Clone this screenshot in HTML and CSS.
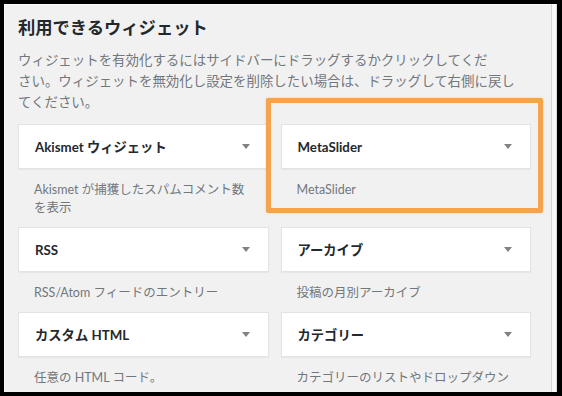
FILE: index.html
```html
<!doctype html>
<html lang="ja">
<head>
  <meta charset="utf-8" />
  <meta name="viewport" content="width=device-width,initial-scale=1" />
  <title>利用できるウィジェット</title>
  <link rel="stylesheet" href="styles.css">
</head>
<body>
  <div class="screen">
    <div class="panel">
      <h2>利用できるウィジェット</h2>
      <p class="intro">ウィジェットを有効化するにはサイドバーにドラッグするかクリックしてくだ<br>さい。ウィジェットを無効化し設定を削除したい場合は、ドラッグして右側に戻し<br>てください。</p>

      <div class="widgets">
        <div class="widget">
          <div class="widget-top"><span class="widget-title">Akismet ウィジェット</span><span class="arrow"></span></div>
          <p class="widget-desc">Akismet が捕獲したスパムコメント数を表示</p>
        </div>
        <div class="widget marked">
          <div class="widget-top"><span class="widget-title">MetaSlider</span><span class="arrow"></span></div>
          <p class="widget-desc">MetaSlider</p>
          <div class="mark"></div>
        </div>
        <div class="widget">
          <div class="widget-top"><span class="widget-title">RSS</span><span class="arrow"></span></div>
          <p class="widget-desc">RSS/Atom フィードのエントリー</p>
        </div>
        <div class="widget">
          <div class="widget-top"><span class="widget-title">アーカイブ</span><span class="arrow"></span></div>
          <p class="widget-desc">投稿の月別アーカイブ</p>
        </div>
        <div class="widget">
          <div class="widget-top"><span class="widget-title">カスタム HTML</span><span class="arrow"></span></div>
          <p class="widget-desc">任意の HTML コード。</p>
        </div>
        <div class="widget">
          <div class="widget-top"><span class="widget-title">カテゴリー</span><span class="arrow"></span></div>
          <p class="widget-desc">カテゴリーのリストやドロップダウン</p>
        </div>
      </div>
    </div>
    <div class="edge"></div>
  </div>
</body>
</html>
```

FILE: styles.css
```css
body { margin:0; background:#000; font-family: Lato, "Noto Sans CJK JP", sans-serif; color:#23282d; }
.screen { display:flex; height:388px; margin:4px 5px 4px 4px; background:#f1f1f1; overflow:hidden; }
.panel { flex:1; padding:11px 0 0 13px; border-top:1px solid #fafafa; border-left:1px solid #fafafa; }
.edge { width:4px; background:#f9f9f9; border-left:1px solid #d6d6d6; border-right:1px solid #dcdcdc; }

h2 { margin:0 0 10px; font-size:17.3px; line-height:24px; font-weight:bold; }
.intro { margin:0 0 11px; width:513px; font-size:13.45px; line-height:21px; color:#72777c; }

.widgets { width:513px; display:grid; grid-template-columns:1fr 1fr; column-gap:12px; row-gap:10px; }
.widget { position:relative; }
.widget-top { height:43px; display:flex; align-items:center; justify-content:space-between; padding:0 18px 0 16px; background:#fff; border:1px solid #e3e3e3; box-shadow:0 1px 1px rgba(0,0,0,0.04); }
.widget-title { font-size:13.3px; font-weight:bold; }
.arrow { width:0; height:0; border-left:4px solid transparent; border-right:4px solid transparent; border-top:5px solid #7e8387; }
.widget-desc { margin:0; padding:12px 16px 0; font-size:12.5px; line-height:18px; color:#72777c; }

.mark { position:absolute; left:-15px; top:-26px; right:-12px; bottom:4px; border:5px solid #f6a34f; border-radius:2px; box-shadow:0 0 2px rgba(246,163,79,0.6); pointer-events:none; }
```
